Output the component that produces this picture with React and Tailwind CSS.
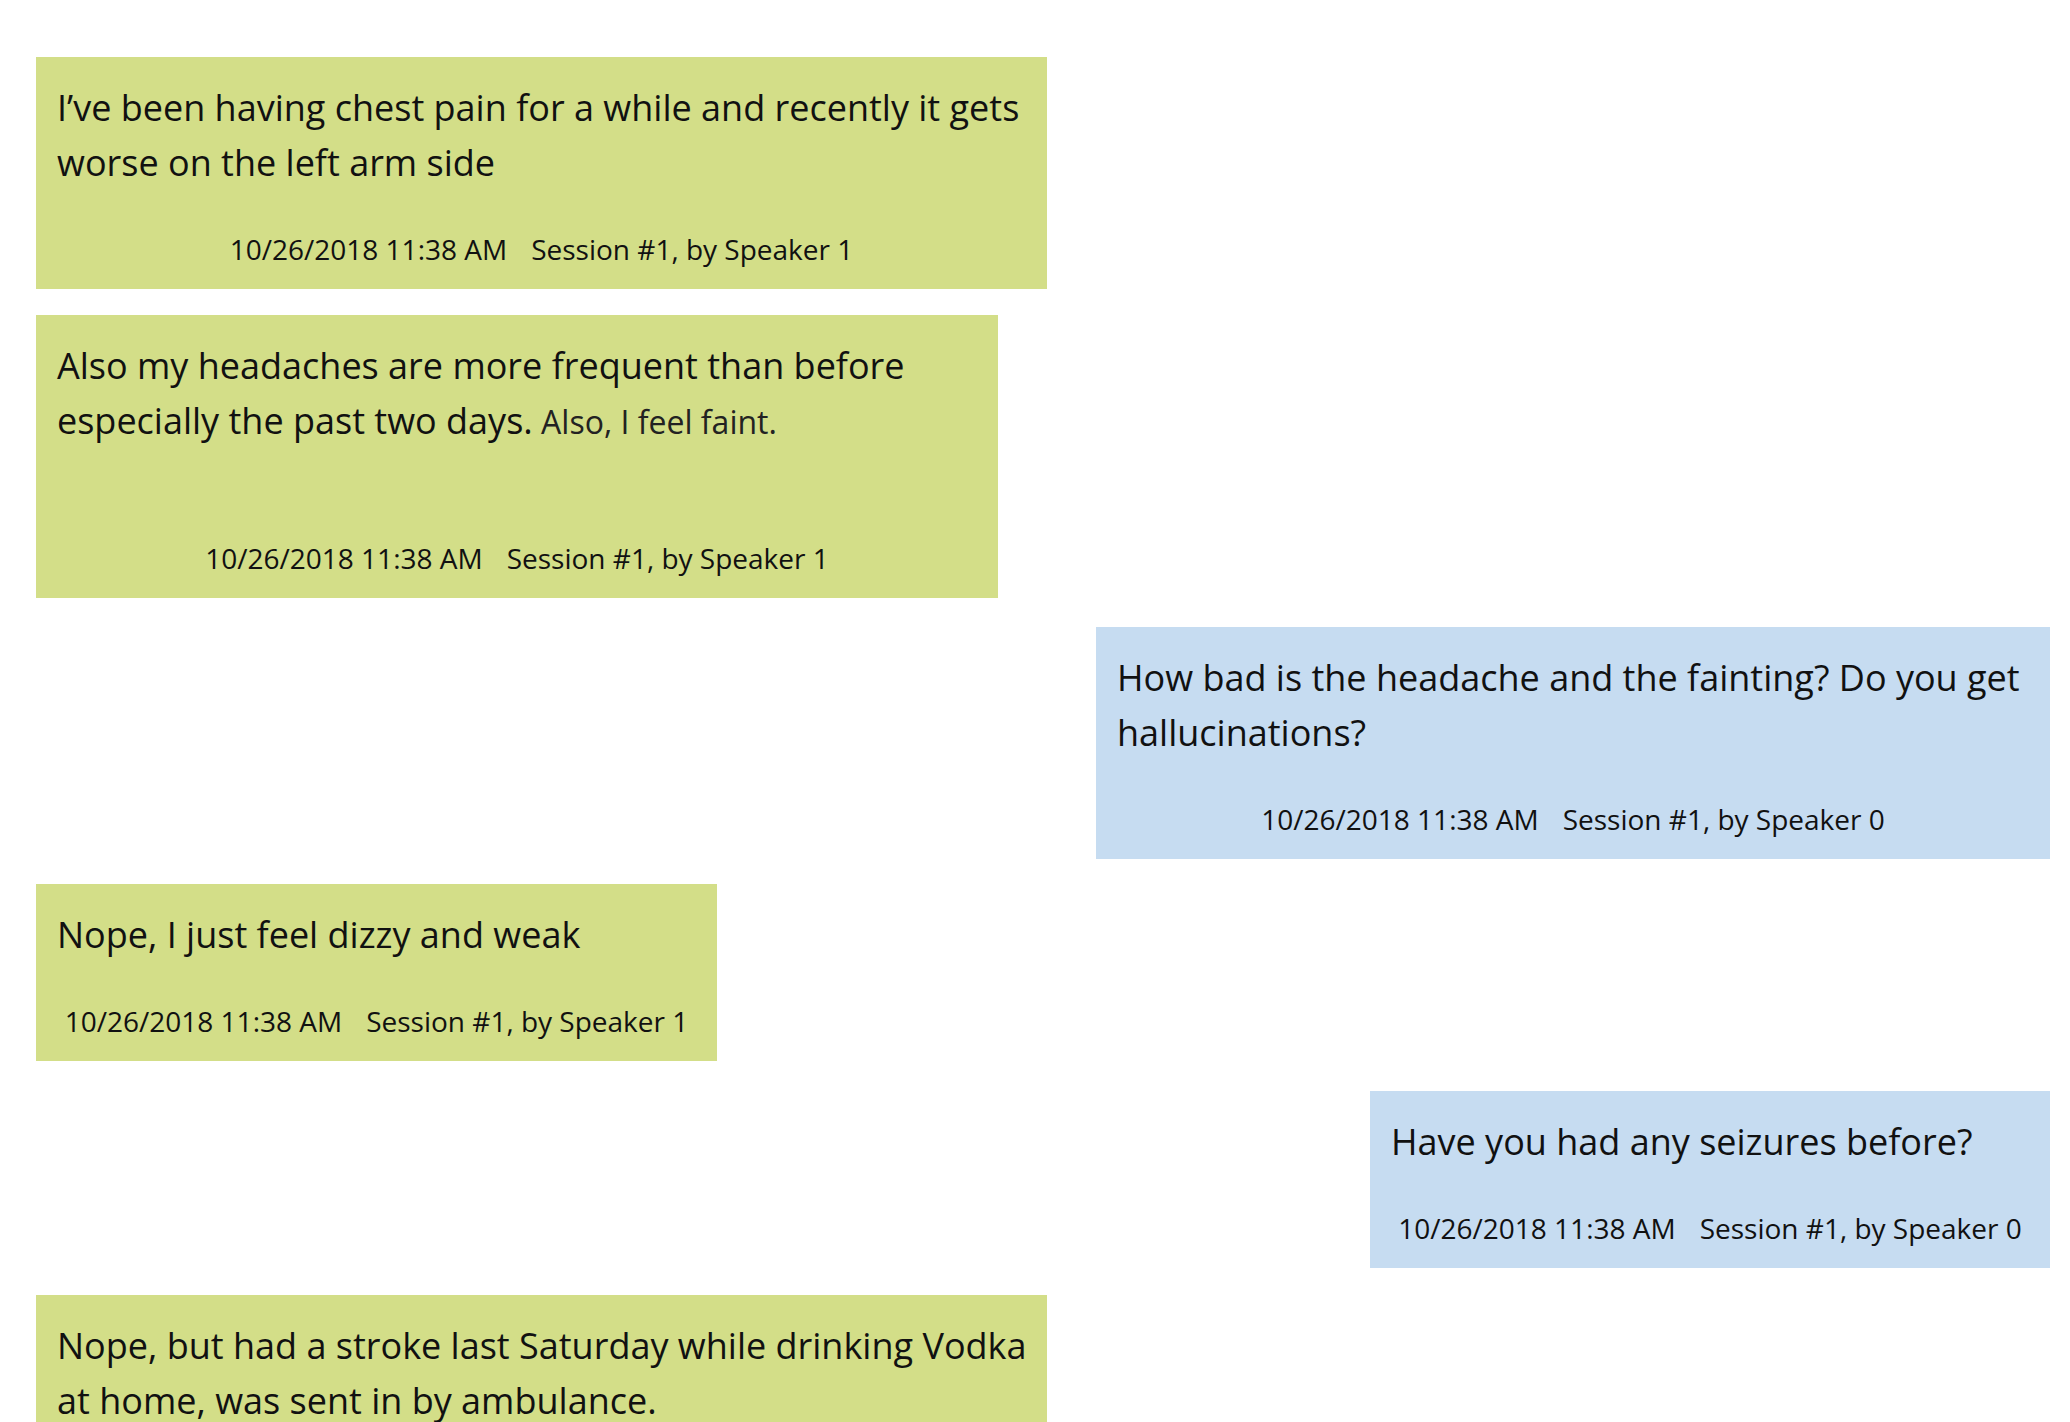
const GREEN = 'bg-[#d3de88]';
const BLUE = 'bg-[#c6dcf1]';

const messages = [
  {
    side: 'left',
    width: 'w-[1011px]',
    gap: 'mt-0',
    lines: ["I’ve been having chest pain for a while and recently it gets", 'worse on the left arm side'],
    speaker: 1,
  },
  {
    side: 'left',
    width: 'w-[962px]',
    gap: 'mt-[26px]',
    lines: [
      'Also my headaches are more frequent than before',
      <>
        especially the past two days.
        <span className="text-[32px] text-[#222]"> Also, I feel faint.</span>
      </>,
    ],
    extra: true,
    speaker: 1,
  },
  {
    side: 'right',
    width: 'w-[954px]',
    gap: 'mt-[29px]',
    lines: ['How bad is the headache and the fainting? Do you get', 'hallucinations?'],
    speaker: 0,
  },
  {
    side: 'left',
    width: 'w-[681px]',
    gap: 'mt-[25px]',
    lines: ['Nope, I just feel dizzy and weak'],
    speaker: 1,
  },
  {
    side: 'right',
    width: 'w-[680px]',
    gap: 'mt-[30px]',
    lines: ['Have you had any seizures before?'],
    speaker: 0,
  },
  {
    side: 'left',
    width: 'w-[1011px]',
    gap: 'mt-[27px]',
    lines: ['Nope, but had a stroke last Saturday while drinking Vodka', 'at home, was sent in by ambulance.'],
    speaker: 1,
  },
];

function Bubble({ msg }) {
  const right = msg.side === 'right';
  return (
    <div
      className={`${msg.width} ${msg.gap} ${right ? 'self-end ' + BLUE : 'self-start ' + GREEN} px-[21px] pt-[23px] pb-[20px]`}
    >
      <div className="text-[36px] leading-[55px] text-[#111] whitespace-nowrap">
        {msg.lines.map((line, i) => (
          <div key={i}>{line}</div>
        ))}
        {msg.extra && <div className="h-[50px]" />}
      </div>
      <div className="mt-[39px] flex justify-center gap-[24px] text-[28px] leading-[40px] text-[#111] whitespace-nowrap">
        <span>10/26/2018 11:38 AM</span>
        <span>Session #1, by Speaker {msg.speaker}</span>
      </div>
    </div>
  );
}

export default function App() {
  return (
    <div
      className="min-h-screen bg-white pl-[36px] pr-[20px] pt-[57px] pb-[40px] flex flex-col"
      style={{ fontFamily: '"Open Sans", "Noto Sans", sans-serif' }}
    >
      {messages.map((m, i) => (
        <Bubble key={i} msg={m} />
      ))}
    </div>
  );
}
